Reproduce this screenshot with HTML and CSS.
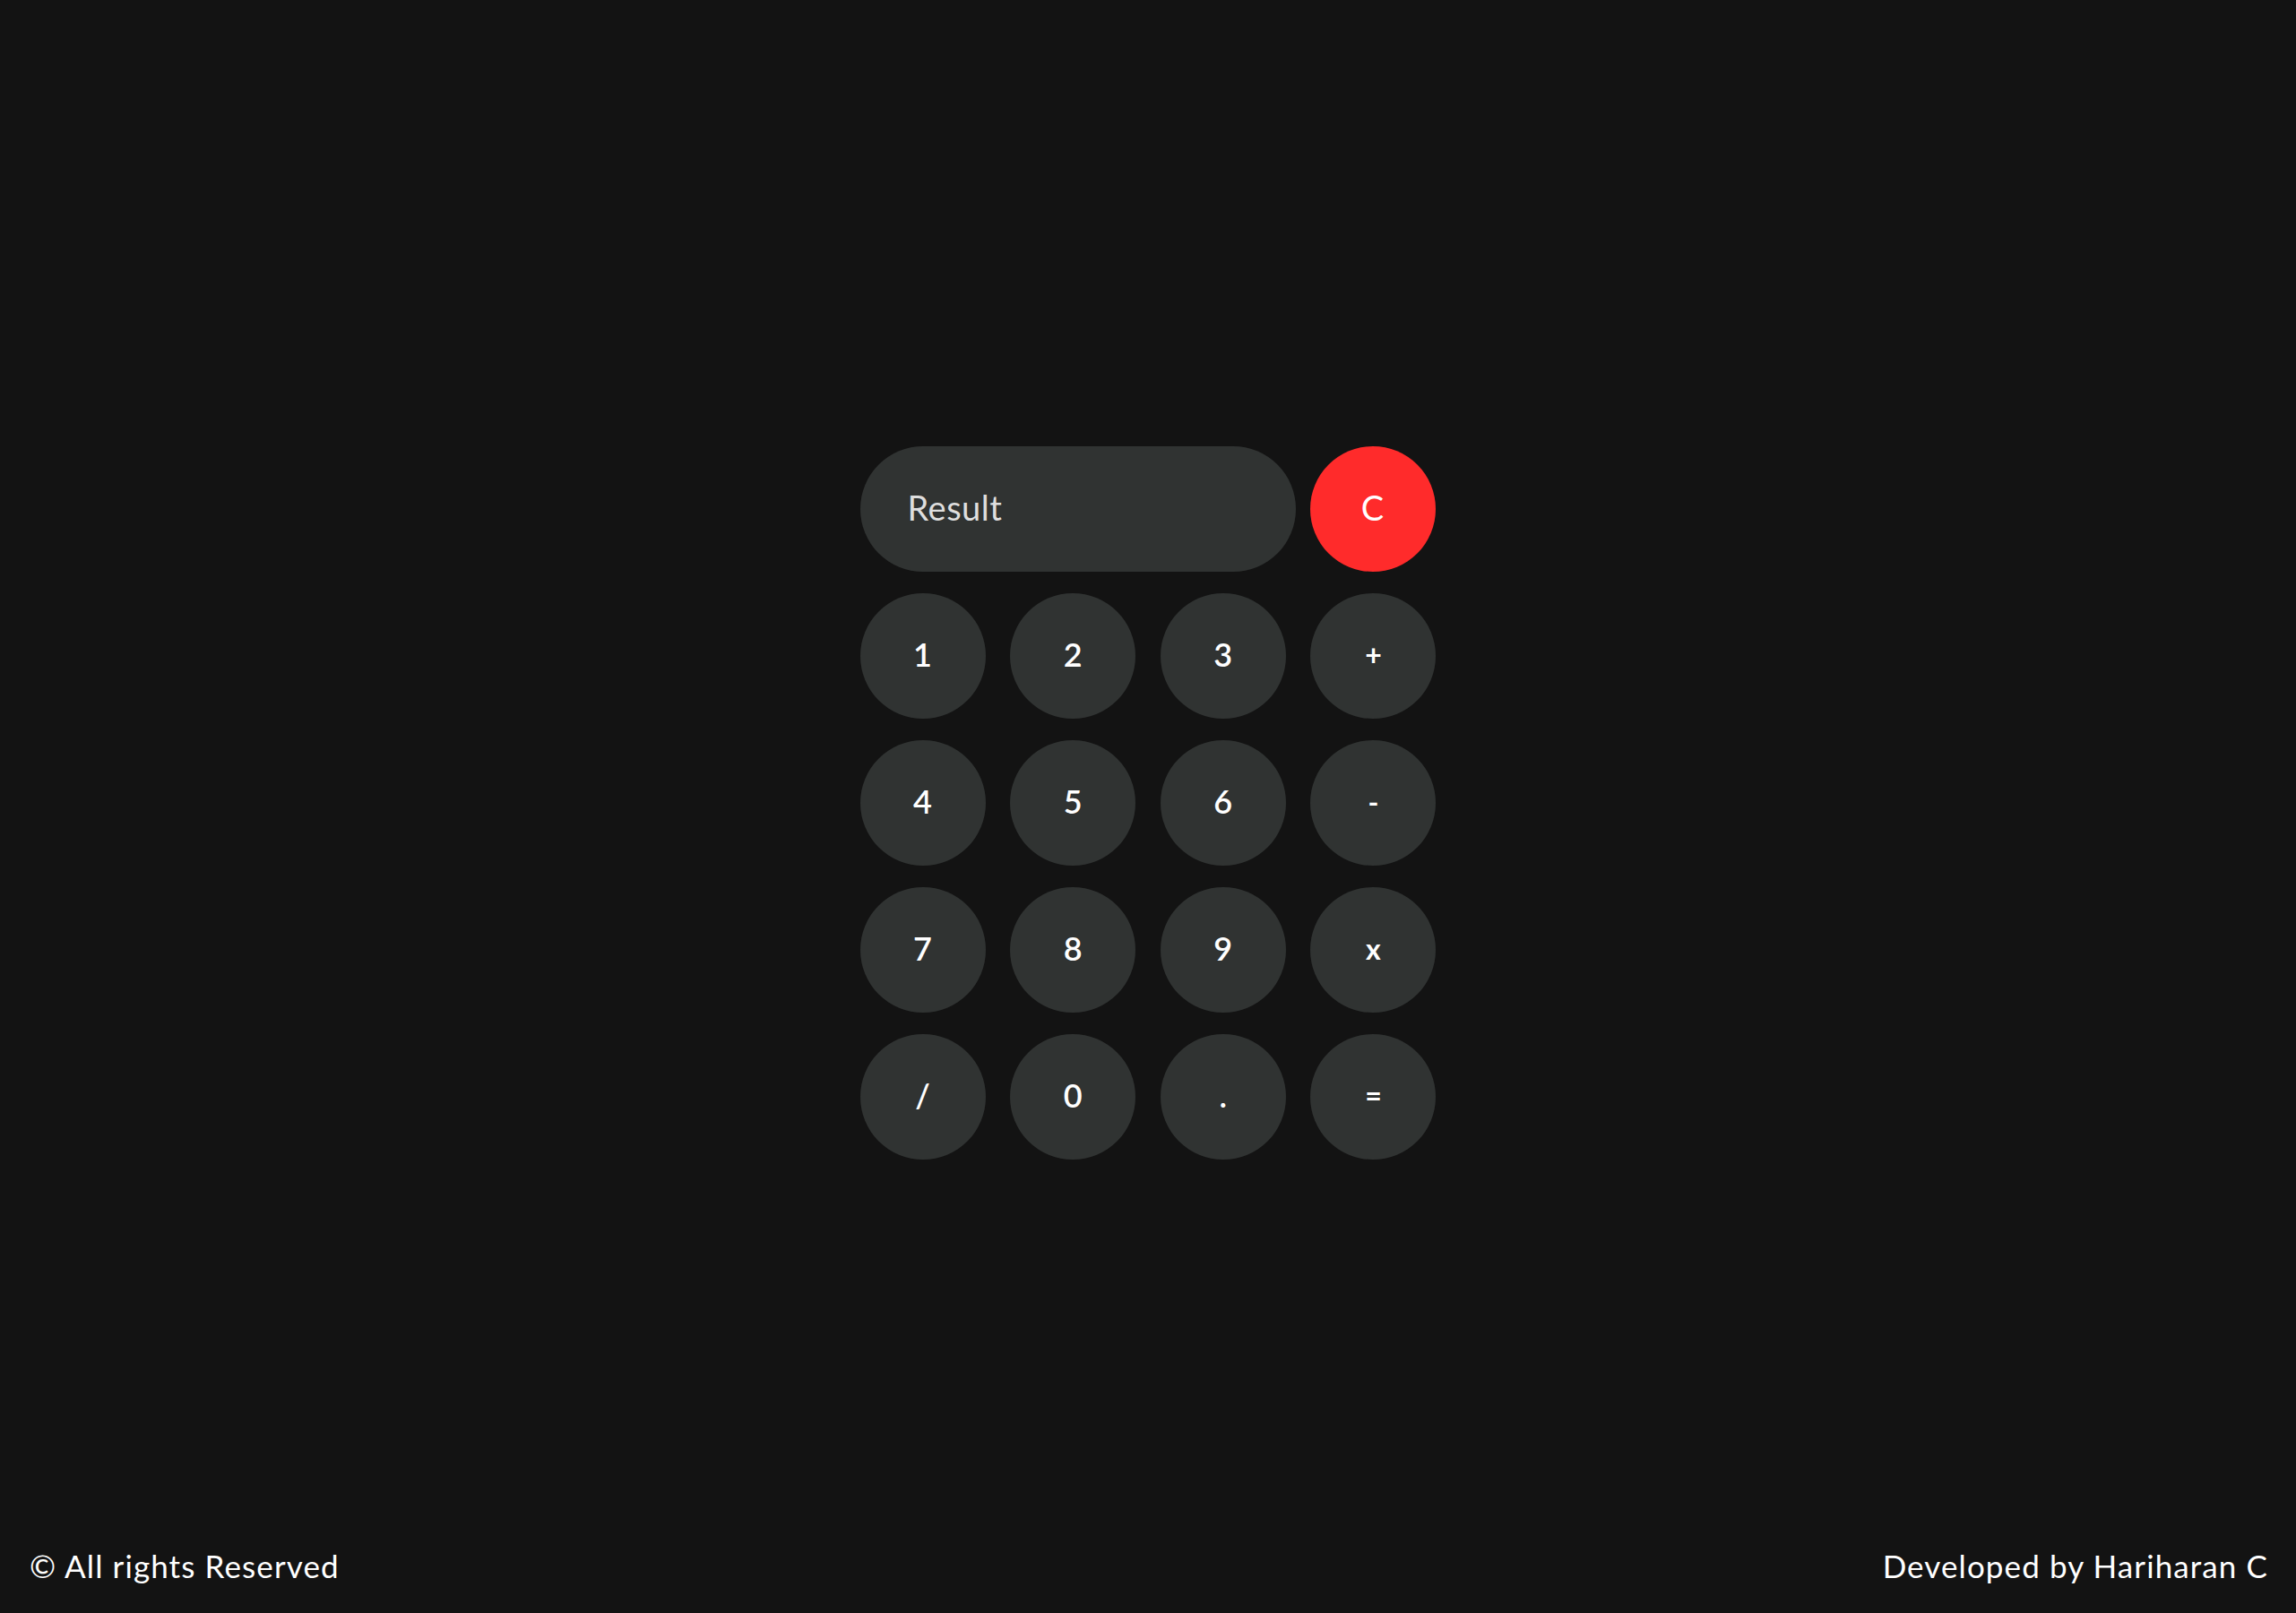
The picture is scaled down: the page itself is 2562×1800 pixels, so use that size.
FILE: index.html
```html
<!DOCTYPE html>
<html lang="en">
<head>
<meta charset="utf-8">
<title>Calculator</title>
<link rel="stylesheet" href="styles.css">
</head>
<body>
<main class="stage">
  <div class="calc">
    <div class="top-row">
      <input class="result" type="text" placeholder="Result" readonly>
      <button class="key key-clear">C</button>
    </div>
    <div class="keys">
      <button class="key">1</button>
      <button class="key">2</button>
      <button class="key">3</button>
      <button class="key key-op">+</button>
      <button class="key">4</button>
      <button class="key">5</button>
      <button class="key">6</button>
      <button class="key key-op">-</button>
      <button class="key">7</button>
      <button class="key">8</button>
      <button class="key">9</button>
      <button class="key key-op">x</button>
      <button class="key">/</button>
      <button class="key">0</button>
      <button class="key">.</button>
      <button class="key key-op">=</button>
    </div>
  </div>
</main>
<footer class="footer">
  <span class="footer-text">© All rights Reserved</span>
  <span class="footer-text">Developed by Hariharan C</span>
</footer>
</body>
</html>
```

FILE: styles.css
```css
* { box-sizing: border-box; }

html, body {
  margin: 0;
  padding: 0;
}

body {
  background: #131313;
  color: #ffffff;
  font-family: "Lato", "Open Sans", sans-serif;
  height: 100vh;
  display: flex;
  flex-direction: column;
  overflow: hidden;
}

.stage {
  flex: 1;
  display: flex;
  align-items: center;
  justify-content: center;
  padding-top: 72px;
}

.calc {
  width: 643px;
  display: flex;
  flex-direction: column;
  gap: 24px;
}

.top-row {
  display: flex;
  gap: 16px;
}

.result {
  width: 486px;
  height: 140px;
  border: none;
  outline: none;
  border-radius: 70px;
  background: #303332;
  padding: 0 0 4px 53px;
  font-family: inherit;
  font-size: 38px;
  letter-spacing: 0.5px;
  color: #e6e6e6;
}

.result::placeholder {
  color: #dedede;
  opacity: 1;
}

.keys {
  display: grid;
  grid-template-columns: repeat(4, 140px);
  justify-content: space-between;
  row-gap: 24px;
}

.key {
  width: 140px;
  height: 140px;
  border: none;
  border-radius: 50%;
  background: #303332;
  color: #ffffff;
  font-family: inherit;
  font-size: 36px;
  font-weight: 600;
  padding: 0 0 4px;
  cursor: pointer;
}

.key-op {
  font-size: 32px;
  font-weight: 700;
}

.key-clear {
  background: #ff2b2b;
  font-size: 38px;
  font-weight: 400;
  flex: none;
}

.footer {
  height: 80px;
  display: flex;
  justify-content: space-between;
  align-items: flex-start;
  padding: 6px 31px 0 33px;
}

.footer-text {
  font-size: 35px;
  letter-spacing: 1.1px;
  line-height: 1.2;
}
```
